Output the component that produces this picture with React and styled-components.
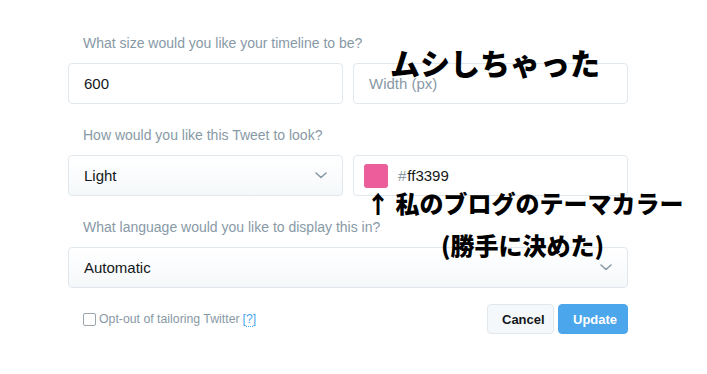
import styled, { createGlobalStyle } from "styled-components";

const GlobalStyle = createGlobalStyle`
    body {
        margin: 0;
        background: #fff;
        font-family: "Liberation Sans", Arial, sans-serif;
    }
`;

const Page = styled.div`
    position: relative;
    width: 707px;
    height: 374px;
    padding: 33px 0 0 68px;
    box-sizing: border-box;
`;
const Form = styled.div`
    width: 560px;
`;
const Group = styled.div`
    margin-bottom: ${props => props.$last ? "16px" : "21px"};
`;
const Label = styled.div`
    padding-left: 15px;
    height: 20px;
    line-height: 20px;
    margin-bottom: 10px;
    font-size: 14px;
    color: #8899a6;
`;
const Row = styled.div`
    display: grid;
    grid-template-columns: 1fr 1fr;
    gap: 10px;
`;
const Box = styled.div`
    display: flex;
    align-items: center;
    height: 41px;
    box-sizing: border-box;
    padding: 0 15px;
    border: 1px solid #e1e8ed;
    border-radius: 4px;
    background: ${props => props.$select ? "linear-gradient(#fff, #f5f8fa)" : "#fff"};
    font-size: 15px;
    color: ${props => props.$placeholder ? "#8899a6" : "#14171a"};
    justify-content: ${props => props.$select ? "space-between" : "flex-start"};
`;
const Swatch = styled.span`
    width: 24px;
    height: 24px;
    border-radius: 3px;
    background: #ee5d9b;
    margin: 0 10px 0 -5px;
`;
const Hash = styled.span`
    color: #8899a6;
    margin-right: 1px;
`;
const Chevron = () => (
    <svg width="12" height="7" viewBox="0 0 12 7">
        <polyline points="1,1 6,5.5 11,1" fill="none" stroke="#8899a6" strokeWidth="1.6" strokeLinecap="round" strokeLinejoin="round" />
    </svg>
);
const Footer = styled.div`
    display: flex;
    align-items: center;
    justify-content: space-between;
`;
const Check = styled.label`
    display: flex;
    align-items: center;
    gap: 3px;
    padding-left: 15px;
    font-size: 12.3px;
    color: #8899a6;
`;
const CheckBox = styled.span`
    width: 11px;
    height: 11px;
    border: 1px solid #9aa4ad;
    border-radius: 2px;
    background: #fff;
`;
const Help = styled.span`
    color: #4aa6eb;
    span {
        border-bottom: 1px dotted #4aa6eb;
    }
`;
const Buttons = styled.div`
    display: flex;
    gap: 4px;
`;
const Button = styled.button`
    height: 30px;
    padding: 0 14px;
    border-radius: 4px;
    font-family: inherit;
    font-weight: bold;
    font-size: 13px;
    border: 1px solid ${props => props.$primary ? "#4ba6ec" : "#e1e8ed"};
    background: ${props => props.$primary ? "#4ba6ec" : "#f5f8fa"};
    color: ${props => props.$primary ? "#fff" : "#14171a"};
    width: ${props => props.$primary ? "70px" : "67px"};
`;
const Note = styled.div`
    position: absolute;
    left: ${props => props.$x}px;
    top: ${props => props.$y}px;
    font-family: "Noto Sans CJK JP", sans-serif;
    font-weight: 900;
    font-size: ${props => props.$size}px;
    line-height: 1;
    color: #000;
    white-space: nowrap;
`;

export default function App() {
    return (
        <Page>
            <GlobalStyle />
            <Form>
                <Group>
                    <Label>What size would you like your timeline to be?</Label>
                    <Row>
                        <Box>600</Box>
                        <Box $placeholder>Width (px)</Box>
                    </Row>
                </Group>
                <Group>
                    <Label>How would you like this Tweet to look?</Label>
                    <Row>
                        <Box $select>Light<Chevron /></Box>
                        <Box><Swatch /><Hash>#</Hash>ff3399</Box>
                    </Row>
                </Group>
                <Group $last>
                    <Label>What language would you like to display this in?</Label>
                    <Box $select>Automatic<Chevron /></Box>
                </Group>
                <Footer>
                    <Check><CheckBox />Opt-out of tailoring Twitter <Help>[<span>?</span>]</Help></Check>
                    <Buttons>
                        <Button>Cancel</Button>
                        <Button $primary>Update</Button>
                    </Buttons>
                </Footer>
            </Form>
            <Note $x={390} $y={47} $size={30}>ムシしちゃった</Note>
            <Note $x={366} $y={191} $size={24}>↑ 私のブログのテーマカラー</Note>
            <Note $x={441} $y={233} $size={24}>(勝手に決めた)</Note>
        </Page>
    );
}
